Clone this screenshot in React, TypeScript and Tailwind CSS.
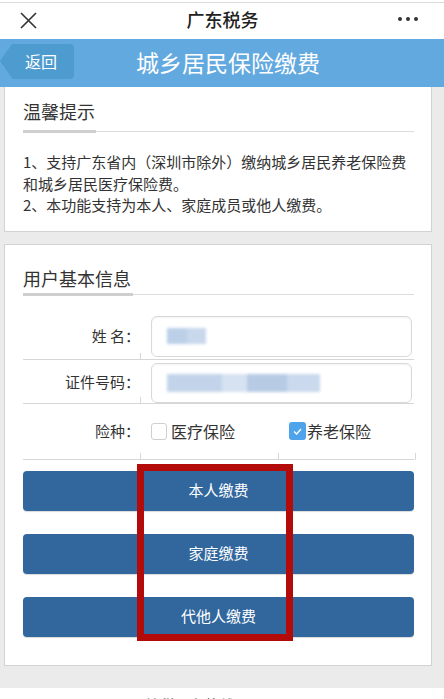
import React from 'react';

const FONT = { fontFamily: '"Noto Sans CJK SC", "Noto Sans", sans-serif' };

// 一行表单：左侧标签 + 右侧输入框
const FieldRow = ({ label, children, className = '' }: { label: string; children: React.ReactNode; className?: string }) => (
  <div className={`flex items-start ${className}`}>
    <div className="w-[117px] text-right text-[15px] text-[#333] self-center">{label}</div>
    <div className="ml-[11px] flex-1 pr-[2px]">{children}</div>
  </div>
);

const Separator = ({ ticks }: { ticks: number[] }) => (
  <div className="relative h-px bg-[#d6d6d6]">
    {ticks.map((x) => (
      <div key={x} className="absolute bottom-0 w-px h-[7px] bg-[#d6d6d6]" style={{ left: x }} />
    ))}
  </div>
);

const PayButton = ({ text }: { text: string }) => (
  <button className="w-full h-[40px] rounded-[4px] bg-[#31679d] text-white text-[15px] shadow-[0_1px_1px_rgba(0,0,0,0.15)]">
    {text}
  </button>
);

export default function App() {
  return (
    <div className="relative w-[444px] min-h-[699px] bg-white overflow-hidden" style={FONT}>
      {/* 顶部微信标题栏 */}
      <div className="mt-[2px] border-t border-[#dcdcdc] h-[37px] flex items-center justify-between pl-[20px] pr-[26px]">
        <svg width="17" height="17" viewBox="0 0 17 17" className="mb-[2px]">
          <path d="M1 1 L16 16 M16 1 L1 16" stroke="#333" strokeWidth="1.6" />
        </svg>
        <div className="text-[18px] font-medium text-[#222] ml-[10px] mb-[4px]">广东税务</div>
        <div className="flex gap-[4px] mb-[4px]">
          <span className="w-[4px] h-[4px] rounded-full bg-[#333]" />
          <span className="w-[4px] h-[4px] rounded-full bg-[#333]" />
          <span className="w-[4px] h-[4px] rounded-full bg-[#333]" />
        </div>
      </div>

      {/* 蓝色页面标题 */}
      <div className="h-[48px] bg-[#62a9df] flex items-center">
        <div className="relative ml-[12px] w-[62px] h-[35px] bg-[#4e9bcf] rounded-r-[4px] flex items-center justify-center text-white text-[16px] pr-[4px] mt-[-4px] shrink-0">
          <span className="absolute left-[-12px] top-0 w-0 h-0 border-y-[17.5px] border-y-transparent border-r-[12px] border-r-[#4e9bcf]" />
          返回
        </div>
        <div className="flex-1 text-center text-white text-[23px] mr-[62px] mt-[-2px]">城乡居民保险缴费</div>
      </div>

      {/* 内容区 */}
      <div className="bg-[#ebebeb] pl-[4px] pr-[12px] pb-[22px]">
        {/* 温馨提示 */}
        <div className="bg-white border-x border-b border-[#d2d2d2] pl-[18px] pr-[17px] pt-[12px] pb-[15px]">
          <div className="text-[18px] leading-[24px] text-[#333]">温馨提示</div>
          <div className="flex items-center mt-[7px]">
            <div className="w-[73px] h-[3px] bg-[#cfcfcf]" />
            <div className="flex-1 h-px bg-[#dcdcdc]" />
          </div>
          <div className="mt-[18px] text-[15px] leading-[21.5px] text-[#333]">
            <p>1、支持广东省内（深圳市除外）缴纳城乡居民养老保险费和城乡居民医疗保险费。</p>
            <p>2、本功能支持为本人、家庭成员或他人缴费。</p>
          </div>
        </div>

        {/* 用户基本信息 */}
        <div className="mt-[12px] bg-white border border-[#d2d2d2] pl-[18px] pr-[17px] pt-[21px] pb-[28px]">
          <div className="text-[18px] leading-[24px] text-[#333]">用户基本信息</div>
          <div className="flex items-center mt-[3px]">
            <div className="w-[110px] h-[3px] bg-[#cfcfcf]" />
            <div className="flex-1 h-px bg-[#dcdcdc]" />
          </div>

          <FieldRow label="姓 名：" className="pt-[20px] pb-[2px]">
            <div className="h-[41px] rounded-[6px] border border-[#d9d9d9] flex items-center pl-[15px] shadow-[inset_0_1px_2px_rgba(0,0,0,0.05)]">
              <div className="flex blur-[1.5px]">
                <div className="w-[20px] h-[16px] bg-[#bcd0e8]" />
                <div className="w-[19px] h-[16px] bg-[#c9d8ec]" />
              </div>
            </div>
          </FieldRow>
          <Separator ticks={[117]} />

          <FieldRow label="证件号码：" className="pt-[3px]">
            <div className="h-[40px] rounded-[6px] border border-[#d9d9d9] flex items-center pl-[15px] shadow-[inset_0_1px_2px_rgba(0,0,0,0.05)]">
              <div className="flex blur-[1.5px]">
                <div className="w-[55px] h-[18px] bg-[#c3d4ea]" />
                <div className="w-[25px] h-[18px] bg-[#d6e2f1]" />
                <div className="w-[40px] h-[18px] bg-[#b7cbe5]" />
                <div className="w-[33px] h-[18px] bg-[#cad9ed]" />
              </div>
            </div>
          </FieldRow>
          <Separator ticks={[117]} />

          <div className="flex items-center h-[55px]">
            <div className="w-[117px] text-right text-[15px] text-[#333]">险种：</div>
            <div className="w-[138px] pl-[11px] flex items-center">
              <span className="w-[16px] h-[17px] rounded-[3px] border border-[#cfcfcf] bg-white" />
              <span className="ml-[4px] text-[16px] text-[#333]">医疗保险</span>
            </div>
            <div className="flex-1 pl-[11px] flex items-center">
              <span className="w-[17px] h-[18px] rounded-[3px] bg-[#4fa3ea] flex items-center justify-center">
                <svg width="11" height="11" viewBox="0 0 11 11">
                  <path d="M2 5.5 L4.6 8 L9 3" fill="none" stroke="white" strokeWidth="1.3" />
                </svg>
              </span>
              <span className="ml-[1px] text-[16px] text-[#333]">养老保险</span>
            </div>
          </div>
          <Separator ticks={[117, 255, 392]} />

          <div className="mt-[11px] flex flex-col gap-[23px]">
            <PayButton text="本人缴费" />
            <PayButton text="家庭缴费" />
            <PayButton text="代他人缴费" />
          </div>
        </div>
      </div>

      {/* 页脚 */}
      <div className="pt-[6px] text-center text-[15px] text-[#555] pr-[8px]">纳税服务热线：12366</div>

      {/* 红色标注框 */}
      <div className="absolute left-[137px] top-[464px] w-[156px] h-[177px] border-[7px] border-[#b30a0a]" />
    </div>
  );
}
